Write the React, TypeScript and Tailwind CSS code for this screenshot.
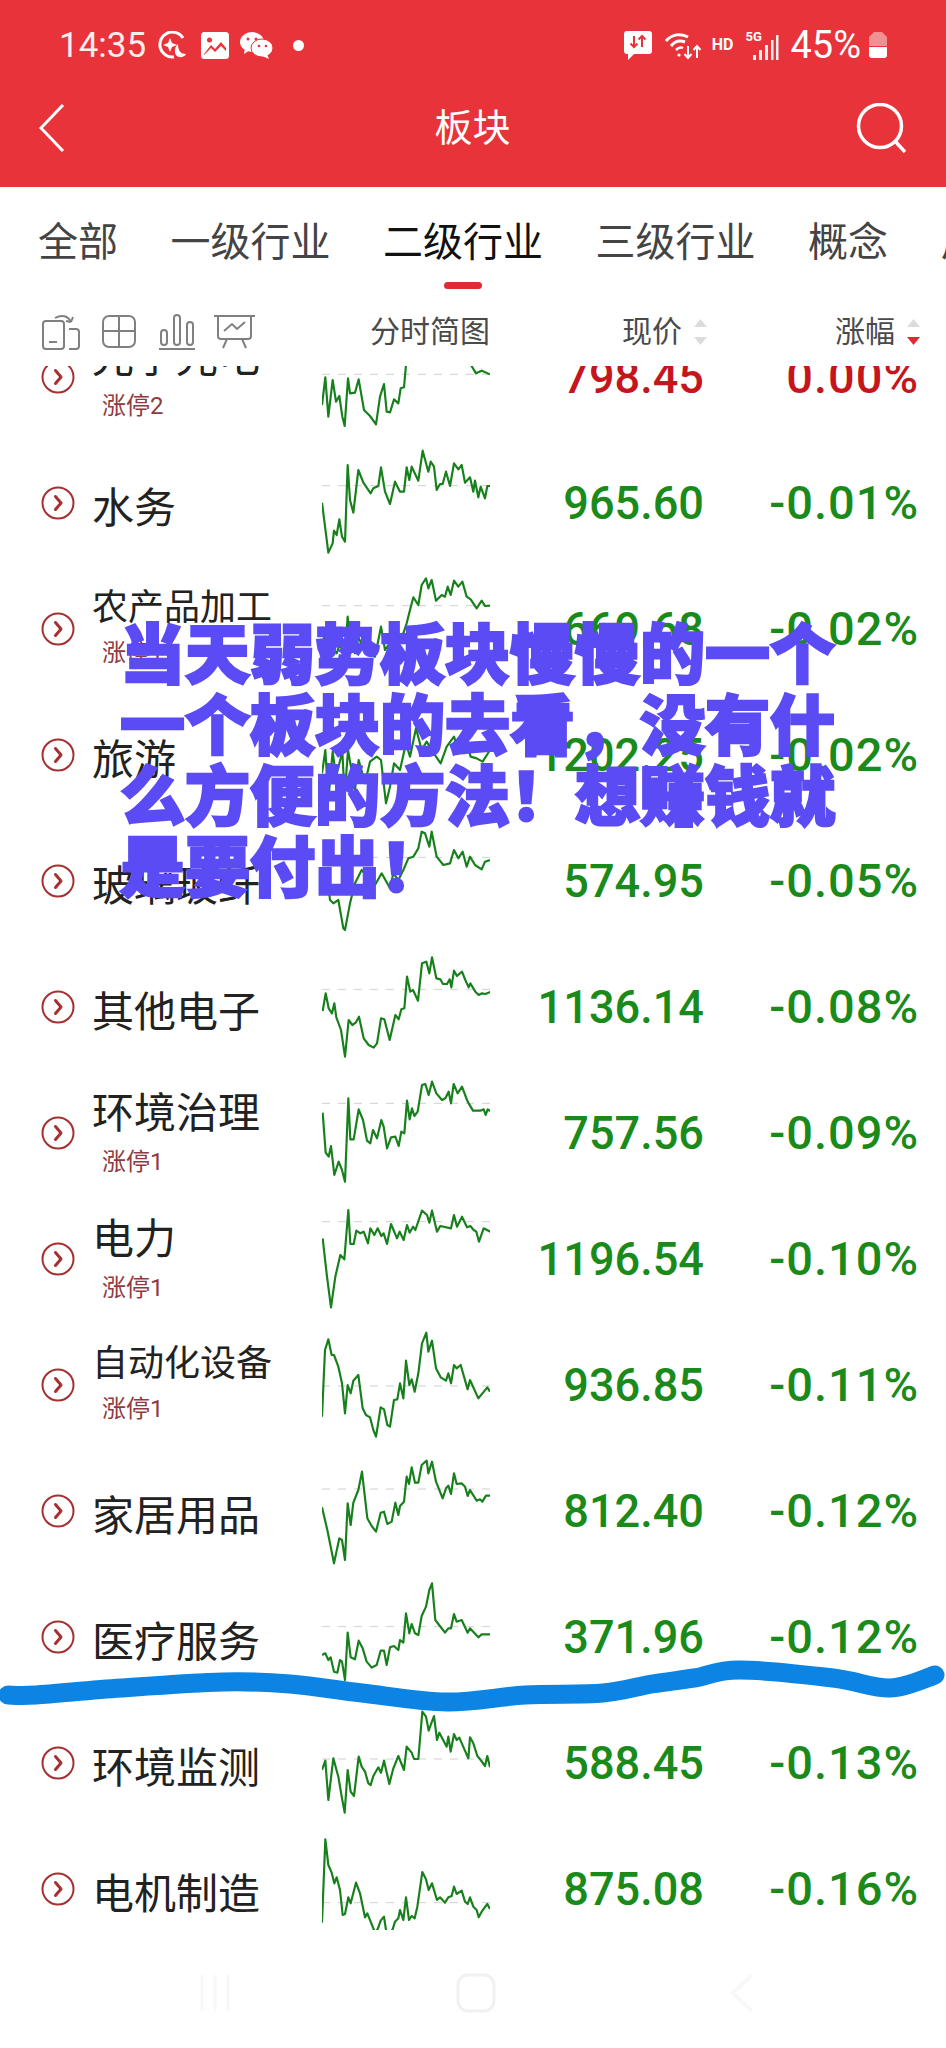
import React from "react";

type Spark = { x0: number; y0: number; dash: number; points: string; h?: number };
type Row = { name: string; tag?: string; price: string; pct: string; small?: boolean; up?: boolean; spark: Spark };

const rows: Row[] = [
    {
        name: "光学光电",
        tag: "涨停2",
        price: "798.45",
        pct: "0.00%",
        up: true,
        spark: {
            x0: 36,
            y0: -138,
            dash: 43,
            points: "36,135 46,52 55,170 68,60 78,125 88,108 97,170 104,198 114,55 120,100 135,98 146,58 162,150 180,168 198,193 210,110 222,72 230,155 240,157 252,118 265,130 272,85 282,82 288,15 295,-10 310,0 330,-40 350,-30 370,-40 400,-10 420,10 430,-30 460,-10 480,10 498,40 515,32 540,43",
        },
    },
    {
        name: "水务",
        price: "965.60",
        pct: "-0.01%",
        spark: {
            x0: 36,
            y0: 240,
            dash: 377,
            points: "36,428 55,578 68,550 72,512 80,525 88,478 96,530 105,545 113,315 120,420 130,458 145,330 160,368 182,400 190,385 205,378 213,322 225,395 240,432 255,365 270,395 282,395 290,322 298,360 305,320 325,362 338,272 355,335 362,305 372,320 380,390 390,372 398,372 408,335 420,378 432,310 445,328 455,315 465,368 480,352 490,395 495,362 505,412 512,380 525,415 532,378 540,378",
        },
    },
    {
        name: "农产品加工",
        tag: "涨停1",
        small: true,
        price: "669.68",
        pct: "-0.02%",
        spark: {
            x0: 36,
            y0: 618,
            dash: 737,
            points: "36,800 55,900 68,870 80,880 90,850 104,900 113,770 120,850 135,880 145,830 165,880 195,890 213,800 225,870 245,840 260,830 280,820 290,790 300,750 310,712 325,735 335,675 348,655 355,685 365,660 378,722 395,705 405,710 413,680 422,705 432,662 445,680 457,665 470,710 482,718 500,745 515,722 525,738 540,737",
        },
    },
    {
        name: "旅游",
        price: "1202.25",
        pct: "-0.02%",
        spark: {
            x0: 36,
            y0: 996,
            dash: 1110,
            points: "36,1240 46,1170 55,1320 68,1175 78,1250 97,1175 104,1310 114,1170 135,1290 146,1200 165,1270 180,1205 200,1190 213,1200 228,1330 240,1280 252,1210 270,1230 288,1150 300,1190 318,1105 335,1170 350,1145 378,1190 392,1210 410,1160 432,1130 445,1170 470,1150 482,1190 500,1195 518,1205 540,1170",
        },
    },
    {
        name: "玻璃玻纤",
        price: "574.95",
        pct: "-0.05%",
        spark: {
            x0: 36,
            y0: 174,
            dash: 292,
            points: "36,360 50,330 60,420 70,430 85,420 100,505 105,510 120,430 135,370 155,330 195,375 215,340 240,385 250,340 265,360 280,330 295,295 310,290 325,265 335,215 345,220 358,260 365,215 380,290 400,315 420,310 432,270 445,295 458,275 470,320 480,290 495,315 515,328 525,305 540,300",
        },
    },
    {
        name: "其他电子",
        price: "1136.14",
        pct: "-0.08%",
        spark: {
            x0: 965,
            y0: 42,
            dash: 178,
            points: "967,243 976,190 985,235 995,250 1002,220 1008,262 1022,300 1034,380 1045,270 1056,285 1066,278 1076,260 1090,325 1105,345 1120,353 1130,340 1142,265 1152,268 1168,330 1185,255 1195,268 1203,238 1212,235 1220,140 1230,185 1238,180 1253,212 1265,100 1278,95 1287,130 1295,82 1308,145 1320,148 1328,162 1340,162 1348,148 1353,172 1361,122 1370,138 1385,125 1395,150 1405,172 1410,160 1425,185 1435,195 1445,190 1455,192 1470,186",
        },
    },
    {
        name: "环境治理",
        tag: "涨停1",
        price: "757.56",
        pct: "-0.09%",
        spark: {
            x0: 965,
            y0: 420,
            dash: 520,
            points: "967,548 976,668 985,680 992,648 1002,735 1015,695 1025,720 1034,755 1044,505 1050,628 1060,628 1075,538 1088,570 1100,632 1110,640 1118,600 1130,625 1143,570 1150,590 1160,655 1172,622 1185,620 1195,648 1203,605 1212,610 1220,512 1228,568 1235,535 1242,558 1252,545 1265,465 1275,462 1285,495 1295,455 1308,490 1325,510 1335,505 1345,485 1352,520 1360,462 1372,490 1385,470 1400,510 1405,520 1418,542 1440,542 1450,538 1456,555 1462,538 1470,543",
        },
    },
    {
        name: "电力",
        tag: "涨停1",
        price: "1196.54",
        pct: "-0.10%",
        spark: {
            x0: 965,
            y0: 798,
            dash: 875,
            points: "967,925 980,1040 992,1132 1005,1040 1020,975 1032,988 1044,840 1050,942 1060,942 1068,902 1080,910 1090,905 1103,940 1110,895 1122,915 1132,895 1143,918 1150,910 1160,942 1172,882 1190,925 1198,905 1210,930 1220,885 1228,908 1238,890 1245,900 1265,842 1280,855 1287,878 1295,842 1310,905 1320,888 1352,895 1361,855 1370,890 1385,860 1400,892 1410,888 1420,900 1428,905 1436,935 1450,895 1470,905",
        },
    },
    {
        name: "自动化设备",
        tag: "涨停1",
        small: true,
        price: "936.85",
        pct: "-0.11%",
        spark: {
            x0: 36,
            y0: 6,
            dash: 198,
            points: "36,290 45,90 55,58 65,105 72,105 85,140 96,190 105,280 113,195 122,220 130,182 145,165 158,265 168,285 180,292 190,330 198,350 212,262 222,268 232,315 240,320 252,240 262,238 270,190 280,235 288,122 298,195 305,178 314,215 325,160 336,70 349,38 355,95 366,62 378,145 392,172 408,182 415,160 423,190 432,135 440,145 452,135 462,170 473,208 480,180 505,235 532,202 540,215",
        },
    },
    {
        name: "家居用品",
        price: "812.40",
        pct: "-0.12%",
        spark: {
            x0: 36,
            y0: 384,
            dash: 507,
            points: "36,562 52,630 72,730 88,655 96,660 105,720 113,550 122,615 130,548 145,510 156,455 172,595 185,618 198,635 212,578 222,575 232,612 245,605 256,548 265,585 270,558 282,545 290,470 297,492 305,442 315,488 325,488 335,435 350,422 355,460 366,425 378,485 398,535 408,505 415,497 423,522 432,460 440,492 455,490 465,500 473,528 480,510 500,542 510,538 517,545 528,527 540,527",
        },
    },
    {
        name: "医疗服务",
        price: "371.96",
        pct: "-0.12%",
        spark: {
            x0: 36,
            y0: 762,
            dash: 920,
            points: "36,1005 46,1000 55,1020 62,1012 72,1055 82,1058 90,1020 96,1025 105,1080 113,938 122,1012 135,1018 146,962 158,985 170,1025 185,1043 200,1035 212,992 222,992 230,1035 240,982 252,978 265,990 270,960 280,968 288,880 298,940 305,912 315,940 325,945 335,888 348,860 358,810 366,790 376,900 385,912 405,938 415,925 423,925 432,882 440,905 455,900 473,938 480,925 505,952 515,943 540,943",
        },
    },
    {
        name: "环境监测",
        price: "588.45",
        pct: "-0.13%",
        spark: {
            x0: 36,
            y0: 30,
            dash: 207,
            points: "36,240 46,212 55,330 70,205 85,260 96,325 104,368 113,240 122,305 132,318 146,200 155,230 165,245 175,280 182,285 190,258 205,232 213,248 222,212 238,282 250,235 265,198 282,240 290,170 305,188 312,207 325,207 337,65 348,80 356,122 372,78 381,150 388,128 410,170 415,140 422,185 432,132 440,150 448,143 475,205 480,142 490,160 502,198 512,210 525,228 532,198 540,232",
        },
    },
    {
        name: "电机制造",
        price: "875.08",
        pct: "-0.16%",
        spark: {
            x0: 36,
            y0: 408,
            dash: 638,
            h: 104,
            points: "36,698 46,448 55,525 65,548 73,580 80,562 90,600 98,675 105,672 115,622 122,640 138,578 150,610 165,682 172,670 190,715 196,730 204,715 212,692 222,680 228,720 235,735 248,718 255,695 265,685 270,660 280,690 288,622 297,690 305,678 314,685 322,650 337,546 348,568 356,600 366,580 381,630 390,622 405,638 415,622 425,618 432,590 440,612 455,602 465,635 473,642 480,622 490,650 500,660 506,682 515,665 532,642 540,657",
        },
    },
];

const tabs = ["全部", "一级行业", "二级行业", "三级行业", "概念", "风格"];

const MiniChart = ({ spark }: { spark: Spark }) => {
    const h = spark.h ?? 126;
    return (
        <svg width={168} height={h} viewBox={`${spark.x0} ${spark.y0} 504 ${h * 3}`} className="self-start block">
            <line
                x1={spark.x0}
                x2={spark.x0 + 504}
                y1={spark.dash}
                y2={spark.dash}
                stroke="#cfcfcf"
                strokeWidth={3}
                strokeDasharray="24 24"
            />
            <polyline points={spark.points} fill="none" stroke="#17801c" strokeWidth={6.5} strokeLinejoin="round" />
        </svg>
    );
};

const ChevronCircle = () => (
    <svg width={34} height={34} viewBox="0 0 34 34" fill="none" stroke="#a5302f">
        <circle cx={17} cy={17} r={15.5} strokeWidth={2} />
        <path d="M14.5 10.5 L20 17 L14.5 23.5" strokeWidth={3} strokeLinecap="round" strokeLinejoin="round" />
    </svg>
);

const SortArrows = ({ active }: { active?: boolean }) => (
    <svg width={13} height={26} viewBox="0 0 13 26" className="ml-[12px]">
        <path d="M6.5 0 L13 8 H0 Z" fill="#dcdcdc" />
        <path d="M0 18 H13 L6.5 26 Z" fill={active ? "#dd2c33" : "#dcdcdc"} />
    </svg>
);

const StatusLeft = () => (
    <div className="flex items-center">
        <span className="text-[35px] leading-none text-[#fdeeee] w-[98px]">14:35</span>
        <svg width={30} height={28} viewBox="0 0 30 28" fill="none">
            <path d="M26 7 A12.5 12.5 0 1 0 17 26" stroke="#fff" strokeWidth={3} />
            <path d="M13 7 L15 12 L20 14 L15 16 L13 21 L11 16 L6 14 L11 12 Z" fill="#fff" />
            <path d="M21 13 C21 20 24 23 29 23 C27 27 21 27 19 24 C17 21 18 15 21 13 Z" fill="#fff" />
        </svg>
        <svg width={28} height={27} viewBox="0 0 28 27" className="ml-[14px]">
            <rect width={28} height={27} rx={3.5} fill="#fff" />
            <path d="M3 22 L10 13 L14 17 L20 10 L25 16 V23 H3 Z" fill="#e8333a" />
            <path d="M3 23 L10 16 L14 20 L20 14 L25 19 V23 Z" fill="#fff" />
            <circle cx={8.5} cy={8} r={2.5} fill="#e8333a" />
        </svg>
        <svg width={33} height={27} viewBox="0 0 33 27" className="ml-[11px]">
            <ellipse cx={12} cy={10} rx={12} ry={10} fill="#fff" />
            <path d="M5 16 L4 22 L10 18 Z" fill="#fff" />
            <circle cx={8} cy={7} r={1.5} fill="#e8333a" />
            <circle cx={16} cy={7} r={1.5} fill="#e8333a" />
            <ellipse cx={22} cy={16} rx={11} ry={9} fill="#fff" stroke="#e8333a" strokeWidth={1} />
            <path d="M27 22 L29 27 L22 24 Z" fill="#fff" />
            <circle cx={19} cy={14} r={1.3} fill="#e8333a" />
            <circle cx={26} cy={14} r={1.3} fill="#e8333a" />
        </svg>
        <span className="ml-[20px] w-[11px] h-[11px] rounded-full bg-white" />
    </div>
);

const StatusRight = () => (
    <div className="flex items-center text-white">
        <svg width={28} height={29} viewBox="0 0 28 29">
            <path d="M3 0 H25 A3 3 0 0 1 28 3 V20 A3 3 0 0 1 25 23 H10 L4 29 V23 H3 A3 3 0 0 1 0 20 V3 A3 3 0 0 1 3 0 Z" fill="#fff" />
            <path d="M10 5 V16 M6.5 12.5 L10 16 L13.5 12.5 M18 16 V5 M14.5 8.5 L18 5 L21.5 8.5" stroke="#e8333a" strokeWidth={2} fill="none" />
        </svg>
        <svg width={37} height={29} viewBox="0 0 37 29" fill="none" stroke="#fff" className="ml-[13px]">
            <path d="M1 10 C7 3 16 2 23 6" strokeWidth={3} />
            <path d="M6 15 C10 10 15 9 20 11" strokeWidth={3} />
            <path d="M11 19 C13 17 16 16 18 17" strokeWidth={2.5} />
            <circle cx={14} cy={24} r={1.6} fill="#fff" stroke="none" />
            <path d="M23 15 V27 M19.5 23 L23 27 L26.5 23 M32 27 V15 M28.5 19 L32 15 L35.5 19" strokeWidth={2} />
        </svg>
        <span className="ml-[10px] text-[16px] leading-none font-bold">HD</span>
        <div className="relative ml-[12px] w-[34px] h-[29px]">
            <svg width={26} height={25} viewBox="0 0 26 25" className="absolute right-0 bottom-0" fill="#fdeeee">
                <rect x={0} y={20} width={3} height={5} />
                <rect x={6} y={15} width={3} height={10} />
                <rect x={12} y={10} width={3} height={15} />
                <rect x={18} y={5} width={2.5} height={20} />
                <rect x={23} y={0} width={2.5} height={25} />
            </svg>
            <span className="absolute left-0 top-[-1px] text-[13px] leading-none font-bold">5G</span>
        </div>
        <span className="ml-[11px] text-[38px] leading-none">45%</span>
        <svg width={18} height={26} viewBox="0 0 18 26" className="ml-[8px]">
            <path d="M5 0 H13 L18 5 V14 H0 V5 Z" fill="#fff" fillOpacity={0.45} />
            <path d="M0 15 H18 V23 A3 3 0 0 1 15 26 H3 A3 3 0 0 1 0 23 Z" fill="#fff" />
        </svg>
    </div>
);

const TableIcons = () => (
    <div className="flex items-center">
        <svg width={38} height={36} viewBox="0 0 38 36" fill="none" stroke="#808080" strokeWidth={2}>
            <rect x={1} y={7} width={21} height={28} rx={3} />
            <path d="M7 28 H15" />
            <path d="M13 4 C20 0 26 2 29 8 M29 8 L24 7 M29 8 L31 3" />
            <path d="M27 15 H34 A3 3 0 0 1 37 18 V32 A3 3 0 0 1 34 35 H27" />
        </svg>
        <svg width={34} height={33} viewBox="0 0 34 33" fill="none" stroke="#808080" strokeWidth={2} className="ml-[22px]">
            <rect x={1} y={1} width={32} height={31} rx={6} />
            <path d="M17 1 V32 M1 16 H33" />
        </svg>
        <svg width={36} height={36} viewBox="0 0 36 36" fill="none" stroke="#808080" strokeWidth={2} className="ml-[23px]">
            <rect x={2} y={16} width={6} height={15} rx={3} />
            <rect x={15} y={1} width={6} height={30} rx={3} />
            <rect x={28} y={8} width={6} height={23} rx={3} />
            <path d="M0 35 H36" />
        </svg>
        <svg width={41} height={35} viewBox="0 0 41 35" fill="none" stroke="#808080" strokeWidth={2} className="ml-[19px]">
            <path d="M0 2 H41 M4 2 V22 A3 3 0 0 0 7 25 H34 A3 3 0 0 0 37 22 V2" />
            <path d="M10 17 L18 10 L23 15 L31 8" />
            <path d="M13 25 L9 34 M28 25 L32 34" />
        </svg>
    </div>
);

// rough Catmull-Rom to bezier, good enough for a pen stroke
const smooth = (p: number[][]) => {
    let d = `M${p[0][0]} ${p[0][1]}`;
    for (let i = 0; i < p.length - 1; i++) {
        const a = p[Math.max(i - 1, 0)];
        const b = p[i];
        const c = p[i + 1];
        const e = p[Math.min(i + 2, p.length - 1)];
        d += ` C${b[0] + (c[0] - a[0]) / 6} ${b[1] + (c[1] - a[1]) / 6} ${c[0] - (e[0] - b[0]) / 6} ${c[1] - (e[1] - b[1]) / 6} ${c[0]} ${c[1]}`;
    }
    return d;
};

const penLine = [
    [8, 55],
    [36, 55],
    [121, 48],
    [223, 42],
    [290, 44],
    [362, 53],
    [447, 62],
    [525, 55],
    [603, 53],
    [652, 44],
    [694, 38],
    [739, 30],
    [833, 38],
    [890, 48],
    [935, 35],
];

export default function App() {
    return (
        <div className="relative w-[946px] h-[2048px] overflow-hidden bg-white font-['Roboto','Noto_Sans_CJK_SC',sans-serif]">
            <div className="h-[187px] bg-[#e8333a] text-white">
                <div className="h-[90px] flex items-center justify-between pl-[59px] pr-[59px]">
                    <StatusLeft />
                    <StatusRight />
                </div>
                <div className="h-[76px] grid grid-cols-3 items-center pl-[39px] pr-[40px]">
                    <svg width={26} height={48} viewBox="0 0 26 48" fill="none" stroke="#fff" strokeWidth={3}>
                        <path d="M24 1 L2 24 L24 47" />
                    </svg>
                    <span className="text-[38px] leading-none text-center">板块</span>
                    <svg width={50} height={50} viewBox="0 0 50 50" fill="none" stroke="#fff" strokeWidth={3.5} className="justify-self-end">
                        <circle cx={24} cy={23} r={21.5} />
                        <path d="M39 38 L49 49" />
                    </svg>
                </div>
            </div>

            <div className="h-[110px] pt-[36px] pl-[38px] flex gap-[52.5px] whitespace-nowrap overflow-hidden">
                {tabs.map((t) => (
                    <div key={t} className={`relative h-[40px] text-[40px] leading-[40px] ${t === "二级行业" ? "text-[#111111]" : "text-[#444444]"}`}>
                        {t}
                        {t === "二级行业" && (
                            <span className="absolute left-[61px] top-[59px] w-[38px] h-[7px] rounded-full bg-[#dd2c33]" />
                        )}
                    </div>
                ))}
            </div>

            <div className="h-[69px] grid grid-cols-[322px_168px_217px_213px] items-center text-[#4a4a4a] text-[30px] leading-none">
                <div className="pl-[42px]">
                    <TableIcons />
                </div>
                <div className="pl-[48px] whitespace-nowrap">分时简图</div>
                <div className="flex items-center justify-end">
                    现价
                    <SortArrows />
                </div>
                <div className="flex items-center justify-end">
                    涨幅
                    <SortArrows active />
                </div>
            </div>

            <div className="h-[1586px] overflow-hidden">
                <div className="mt-[-52px]">
                    {rows.map((r) => (
                        <div key={r.name} className="h-[126px] grid grid-cols-[92px_230px_168px_214px_215px] items-center">
                            <div className="pl-[41px] flex items-center">
                                <ChevronCircle />
                            </div>
                            {r.tag ? (
                                <div className="flex flex-col">
                                    <span className={`h-[46px] leading-[46px] text-[#222222] whitespace-nowrap ${r.small ? "text-[36px]" : "text-[42px] pt-[2px]"}`}>
                                        {r.name}
                                    </span>
                                    <span className={`ml-[10px] h-[30px] leading-[30px] text-[24px] text-[#8f3a3f] ${r.small ? "mt-[7px] mb-[5px]" : "mt-[12px]"}`}>
                                        {r.tag}
                                    </span>
                                </div>
                            ) : (
                                <span className="pt-[11px] text-[42px] leading-[46px] text-[#222222] whitespace-nowrap">{r.name}</span>
                            )}
                            <MiniChart spark={r.spark} />
                            <span className={`text-right text-[47px] leading-none font-medium origin-right scale-x-[0.96] pb-[2px] ${r.up ? "text-[#c4161c]" : "text-[#1a8a1a]"}`}>
                                {r.price}
                            </span>
                            <span className={`text-right text-[47px] leading-none font-medium tracking-[1px] pb-[2px] ${r.up ? "text-[#c4161c]" : "text-[#1a8a1a]"}`}>
                                {r.pct}
                            </span>
                        </div>
                    ))}
                </div>
            </div>

            <div className="h-[96px] pt-[21px] pl-[200px] flex items-start">
                <svg width={30} height={40} viewBox="0 0 30 40" fill="none" stroke="#f8f8f8" strokeWidth={3}>
                    <path d="M2 2 V38 M15 2 V38 M28 2 V38" />
                </svg>
                <svg width={40} height={40} viewBox="0 0 40 40" fill="none" stroke="#f1f1f1" strokeWidth={3} className="ml-[226px]">
                    <rect x={2} y={2} width={36} height={36} rx={10} />
                </svg>
                <svg width={24} height={40} viewBox="0 0 24 40" fill="none" stroke="#f8f8f8" strokeWidth={4} className="ml-[234px]">
                    <path d="M22 2 L3 20 L22 38" />
                </svg>
            </div>

            <p className="absolute left-[120px] top-[615px] w-[720px] text-[65px] leading-[71px] font-black text-[#5b4bf5] break-all [-webkit-text-stroke:2.5px_#5b4bf5] font-['Noto_Sans_CJK_SC',sans-serif]">
                当天弱势板块慢慢的一个一个板块的去看，没有什么方便的方法！想赚钱就是要付出！
            </p>

            <svg width={946} height={90} viewBox="0 0 946 90" fill="none" className="absolute left-0 top-[1640px]">
                <path d={smooth(penLine)} stroke="#0b84e3" strokeWidth={19} strokeLinecap="round" strokeLinejoin="round" />
            </svg>
        </div>
    );
}
